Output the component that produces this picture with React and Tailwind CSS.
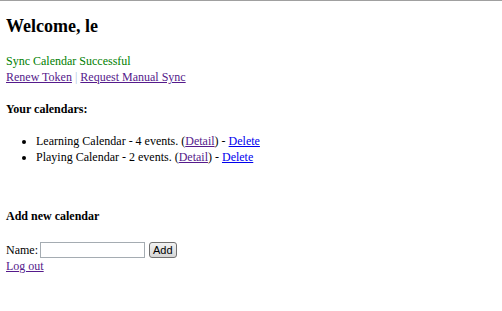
export default function App() {
  const serif = { fontFamily: '"Liberation Serif", "Times New Roman", serif' };
  return (
    <div className="w-[502px] h-[311px] bg-white border-t border-[#a0a0a0] text-black text-[12px] leading-[16px] pl-[6px]" style={serif}>
      <h1 className="text-[18px] leading-[21px] font-bold mt-[15px]">Welcome, le</h1>
      <div className="mt-[16px] text-[#008000]">Sync Calendar Successful</div>
      <div>
        <a href="#" className="text-[#551a8b] underline">Renew Token</a>
        <span className="text-[#b0c4de]"> | </span>
        <a href="#" className="text-[#551a8b] underline">Request Manual Sync</a>
      </div>
      <h3 className="font-bold mt-[16px]">Your calendars:</h3>
      <ul className="list-disc pl-[30px] mt-[16px]">
        <li>
          Learning Calendar - 4 events. (<a href="#" className="text-[#551a8b] underline">Detail</a>) - <a href="#" className="text-[#0000ee] underline">Delete</a>
        </li>
        <li>
          Playing Calendar - 2 events. (<a href="#" className="text-[#551a8b] underline">Detail</a>) - <a href="#" className="text-[#0000ee] underline">Delete</a>
        </li>
      </ul>
      <h3 className="font-bold mt-[43px]">Add new calendar</h3>
      <div className="mt-[17px] flex items-center h-[17px]">
        <span>Name:</span>
        <input type="text" className="ml-[2px] w-[105px] h-[16px] border border-[#a5acb2] bg-white outline-none" />
        <button className="ml-[4px] h-[16px] px-[3px] text-[11px] leading-[12px] border border-[#707070] rounded-[3px] bg-gradient-to-b from-[#f2f2f2] to-[#d6d6d6]" style={{ fontFamily: '"Liberation Sans", Arial, sans-serif' }}>Add</button>
      </div>
      <div>
        <a href="#" className="text-[#551a8b] underline">Log out</a>
      </div>
    </div>
  );
}
